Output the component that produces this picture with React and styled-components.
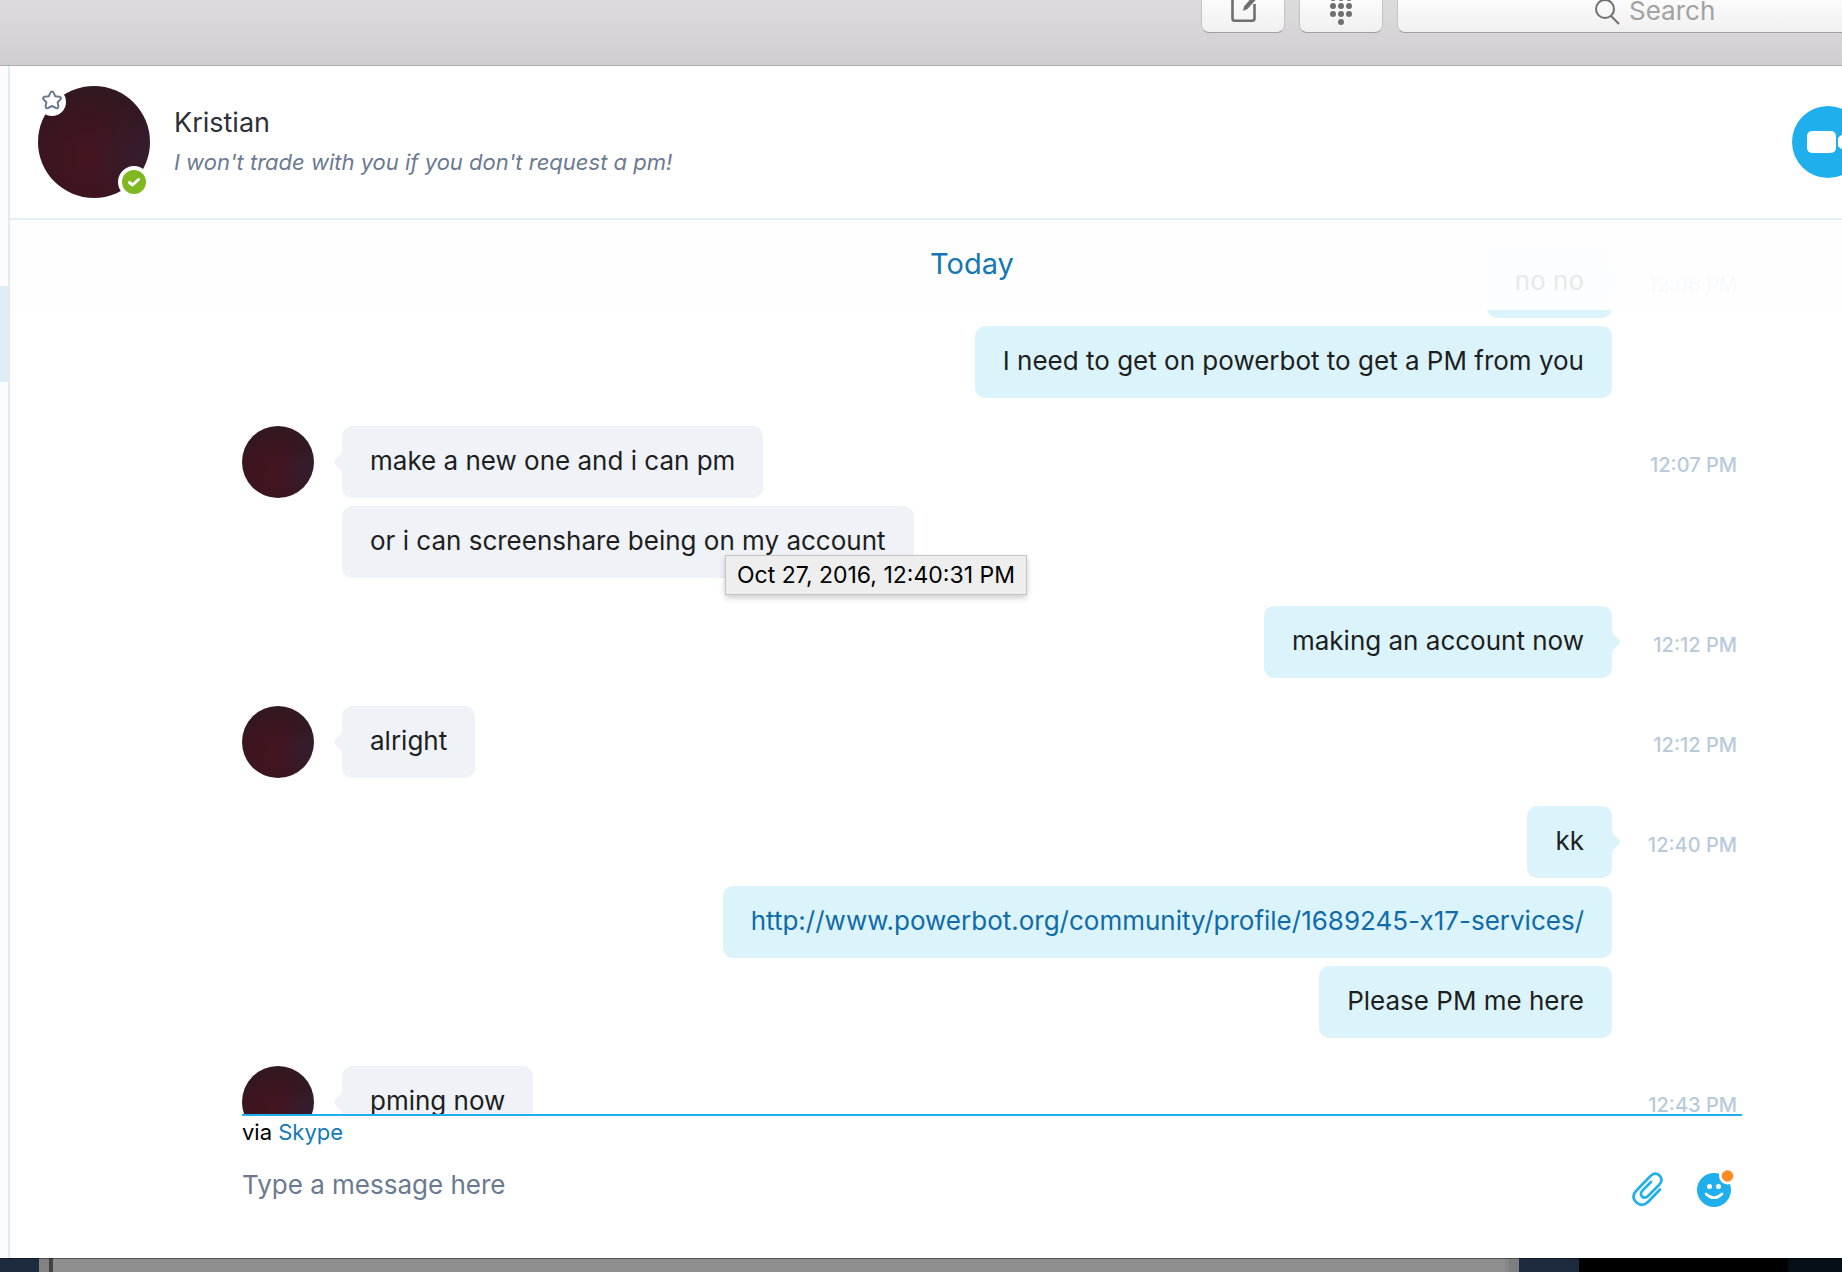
import React, { useState } from "react";
import styled, { createGlobalStyle, css } from "styled-components";

const messages = [
  { id: 1, mine: true, text: "no no", time: "12:06 PM", first: true },
  { id: 2, mine: true, text: "I need to get on powerbot to get a PM from you" },
  { id: 3, text: "make a new one and i can pm", time: "12:07 PM", first: true },
  { id: 4, text: "or i can screenshare being on my account", tip: "Oct 27, 2016, 12:40:31 PM" },
  { id: 5, mine: true, text: "making an account now", time: "12:12 PM", first: true },
  { id: 6, text: "alright", time: "12:12 PM", first: true },
  { id: 7, mine: true, text: "kk", time: "12:40 PM", first: true },
  { id: 8, mine: true, text: "http://www.powerbot.org/community/profile/1689245-x17-services/", link: true },
  { id: 9, mine: true, text: "Please PM me here" },
  { id: 10, text: "pming now", time: "12:43 PM", first: true },
];

export default function App() {
  return (
    <>
      <GlobalStyle />
      <Screen>
        <Toolbar />
        <Body>
          <Sidebar>
            <SelectedChat />
          </Sidebar>
          <Chat>
            <ChatHeader />
            <History>
              <DateBar>Today</DateBar>
              {messages.map((message) => <Message key={message.id} {...message} />)}
            </History>
            <Composer />
          </Chat>
        </Body>
        <Desktop>
          <Strip color="#1e2a3f" />
          <Strip color="#828282" />
          <Strip color="#444444" />
          <Strip color="#8f8f8f" />
          <Strip color="#868686" />
          <Strip color="#7e7e7e" />
          <Strip color="#1e2a3f" />
          <Strip color="#000000" />
          <Strip color="#050f15" />
        </Desktop>
      </Screen>
    </>
  );
}

function Toolbar() {
  return (
    <ToolbarContainer>
      <ToolbarButton aria-label="New conversation">
        <svg width="82" height="32" viewBox="0 0 82 32" fill="none">
          <path d="M42 -2H33Q30.500 -2 30.500 0.500V18.500Q30.500 20.800 33 20.800H50Q52.500 20.800 52.500 18.500V4" stroke="#6f6f6f" strokeWidth="2.600" />
          <path d="M41 11L42 6.500L51 -4L54.500 -1L45.500 9Z" fill="#6f6f6f" />
        </svg>
      </ToolbarButton>
      <ToolbarButton aria-label="Dial pad">
        <svg width="82" height="32" viewBox="0 0 82 32" fill="#6f6f6f">
          {[-2, 6, 14].map((y) => [33, 41, 49].map((x) => <circle key={x + y * 100} cx={x} cy={y} r="3" />))}
          <circle cx="41" cy="22" r="3" />
        </svg>
      </ToolbarButton>
      <SearchBox>
        <svg width="28" height="26" viewBox="0 0 28 26" fill="none" stroke="#6f6f6f" strokeWidth="2">
          <circle cx="11" cy="9" r="9" />
          <path d="M17 16L25 24" />
        </svg>
        <SearchInput type="text" placeholder="Search" aria-label="Search" />
      </SearchBox>
    </ToolbarContainer>
  );
}

function ChatHeader() {
  return (
    <HeaderContainer>
      <HeaderAvatar>
        <FavoriteButton aria-label="Add to favorites">
          <svg width="28" height="28" viewBox="0 0 28 28" fill="none" stroke="#6b7a90" strokeWidth="2" strokeLinejoin="round">
            <path d="M14 3.500Q15.200 3.500 15.700 4.800L17.300 8.300L21.300 8.800Q24 9.500 22.400 11.500L19.600 14.200L20.400 18Q20.400 20.900 18 20L14 18L10 20Q7.600 20.900 7.600 18L8.400 14.200L5.600 11.500Q4 9.500 6.700 8.800L10.700 8.300L12.300 4.800Q12.800 3.500 14 3.500Z" />
          </svg>
        </FavoriteButton>
        <OnlineBadge>
          <svg width="24" height="24" viewBox="0 0 24 24" fill="none" stroke="#ffffff" strokeWidth="3" strokeLinecap="round" strokeLinejoin="round">
            <path d="M7.500 12.500L10.500 15L16.500 9.500" />
          </svg>
        </OnlineBadge>
      </HeaderAvatar>
      <Contact>
        <ContactName>Kristian</ContactName>
        <ContactMood>I won't trade with you if you don't request a pm!</ContactMood>
      </Contact>
      <VideoButton aria-label="Video call">
        <svg width="72" height="72" viewBox="0 0 72 72" fill="#ffffff">
          <rect x="15" y="25" width="29" height="22" rx="5" />
          <path d="M46 33Q46 31 48 30L55 26Q57 25 57 28V44Q57 47 55 46L48 42Q46 41 46 39Z" />
        </svg>
      </VideoButton>
    </HeaderContainer>
  );
}

function Message({ mine, text, time, first, link, tip }) {
  return (
    <Row $first={first}>
      <AvatarSlot>{first && !mine && <SmallAvatar />}</AvatarSlot>
      <BubbleArea $mine={mine}>
        <Bubble $mine={mine}>
          {first && <Tail $mine={mine} />}
          {link ? <BubbleLink href={text}>{text}</BubbleLink> : text}
          {tip && <Tooltip role="tooltip">{tip}</Tooltip>}
        </Bubble>
      </BubbleArea>
      <Time>{time}</Time>
    </Row>
  );
}

function Tail({ $mine }) {
  return (
    <TailSvg $mine={$mine} width="8" height="28" viewBox="0 0 8 28">
      <path d="M8 0Q8 5 5 8L1.500 11.500Q-1 14 1.500 16.500L5 20Q8 23 8 28Z" />
    </TailSvg>
  );
}

function Composer() {
  const [text, setText] = useState("");

  return (
    <ComposerContainer>
      <Via>via <ViaLink href="#skype">Skype</ViaLink></Via>
      <ComposerRow>
        <ComposerInput
          type="text"
          placeholder="Type a message here"
          aria-label="Type a message here"
          value={text}
          onChange={(e) => setText(e.target.value)}
        />
        <IconButton aria-label="Attach a file">
          <svg width="40" height="40" viewBox="0 0 40 40" fill="none" stroke="#1fafec" strokeWidth="2.600" strokeLinecap="round" strokeLinejoin="round">
            <path d="M33 20.500L21.500 32.500Q15.500 38.500 9.500 33.500Q3.500 28 9 22L23 7.500Q28 2.500 32.500 6.500Q36.800 11 32 16L21 27Q17.500 30 15 27.500Q12.500 25 15.500 21.500L24 13" />
          </svg>
        </IconButton>
        <IconButton aria-label="Emoticons">
          <svg width="40" height="40" viewBox="0 0 40 40" fill="none">
            <circle cx="19" cy="21" r="17" fill="#1fafec" />
            <circle cx="14.500" cy="17.500" r="2.500" fill="#ffffff" />
            <circle cx="23.500" cy="17.500" r="2.500" fill="#ffffff" />
            <path d="M11 25Q19 32.500 27 25" stroke="#ffffff" strokeWidth="2.600" strokeLinecap="round" />
            <circle cx="32.500" cy="7" r="8.500" fill="#ffffff" />
            <circle cx="32.500" cy="7" r="5.800" fill="#ff8c22" />
          </svg>
        </IconButton>
      </ComposerRow>
    </ComposerContainer>
  );
}

const GlobalStyle = createGlobalStyle`
  * {
    box-sizing: border-box;
  }

  body {
    margin: 0;
    font-family: Inter, 'Liberation Sans', sans-serif;
    background-color: #ffffff;
    overflow: hidden;
  }

  button, input {
    font-family: inherit;
    border: none;
    padding: 0;
    background: none;
    outline: none;
  }

  button {
    cursor: pointer;
  }

  svg {
    display: block;
    flex-shrink: 0;
  }

  a {
    text-decoration: none;
  }
`;

const Screen = styled.div`
  display: flex;
  flex-direction: column;
  height: 100vh;
`;

const ToolbarContainer = styled.header`
  display: flex;
  justify-content: flex-end;
  align-items: flex-start;
  gap: 14px;
  height: 66px;
  flex-shrink: 0;
  background: linear-gradient(#dddbdd, #d0ced0);
  border-bottom: 1px solid #aeacae;
`;

const toolbarControl = css`
  height: 33px;
  background: linear-gradient(#fbfbfb, #f0f0f0);
  border: 1px solid #c4c2c4;
  border-top: none;
  border-bottom-color: #a2a0a2;
`;

const ToolbarButton = styled.button`
  ${toolbarControl}
  width: 84px;
  border-radius: 0 0 8px 8px;
  display: flex;
  justify-content: center;
  overflow: hidden;
`;

const SearchBox = styled.label`
  ${toolbarControl}
  width: 445px;
  display: flex;
  align-items: flex-start;
  gap: 7px;
  padding-left: 196px;
  border-right: none;
  border-radius: 0 0 0 8px;
`;

const SearchInput = styled.input`
  min-width: 0;
  flex: 1;
  height: 20px;
  line-height: 20px;
  font-size: 26px;
  overflow: visible;

  &::placeholder {
    color: #a2a2a2;
    opacity: 1;
    line-height: 20px;
  }
`;

const Body = styled.div`
  display: flex;
  flex: 1;
  min-height: 0;
`;

const Sidebar = styled.aside`
  width: 10px;
  flex-shrink: 0;
  padding-top: 220px;
  background-color: #fafcfd;
  border-right: 2px solid #dfecf5;
`;

const SelectedChat = styled.div`
  height: 96px;
  background-color: #e0edf5;
`;

const Chat = styled.main`
  display: flex;
  flex-direction: column;
  flex: 1;
  min-width: 0;
`;

const HeaderContainer = styled.section`
  display: flex;
  align-items: center;
  gap: 24px;
  height: 154px;
  padding-left: 28px;
  flex-shrink: 0;
  overflow: hidden;
  border-bottom: 2px solid #e5f0f6;
`;

const Avatar = styled.div`
  border-radius: 50%;
  background:
    radial-gradient(circle at 100% 65%, rgba(52, 32, 56, 0.7) 0%, rgba(52, 32, 56, 0) 45%),
    radial-gradient(circle at 45% 65%, #45151f 0%, #3b151f 45%, #2c1a22 90%);
`;

const HeaderAvatar = styled(Avatar)`
  position: relative;
  width: 112px;
  height: 112px;
  flex-shrink: 0;
`;

const FavoriteButton = styled.button`
  position: absolute;
  top: 2px;
  left: 0;
  width: 28px;
  height: 28px;
  border-radius: 50%;
  background-color: #ffffff;
`;

const OnlineBadge = styled.span`
  position: absolute;
  right: 0;
  bottom: 0;
  border: 4px solid #ffffff;
  border-radius: 50%;
  background-color: #80b822;
`;

const Contact = styled.div`
  flex: 1;
  min-width: 0;
`;

const ContactName = styled.h1`
  margin: 0;
  font-size: 27px;
  font-weight: 400;
  line-height: 40px;
  color: #2e3038;
`;

const ContactMood = styled.p`
  margin: 0;
  font-size: 22px;
  font-style: italic;
  line-height: 38px;
  color: #6b7a90;
`;

const VideoButton = styled.button`
  width: 72px;
  height: 72px;
  margin-right: -22px;
  flex-shrink: 0;
  border-radius: 50%;
  background-color: #1fafec;
`;

const History = styled.section`
  position: relative;
  flex: 1;
  min-height: 0;
  overflow: hidden;
  padding: 0 100px 0 232px;
`;

const DateBar = styled.div`
  position: absolute;
  z-index: 1;
  top: 0;
  left: 0;
  right: 0;
  height: 90px;
  padding-left: 92px;
  font-size: 29px;
  line-height: 87px;
  text-align: center;
  color: #1478b4;
  background-color: rgba(254, 254, 254, 0.9);
`;

const Row = styled.div`
  display: flex;
  height: 72px;
  margin-top: ${({ $first }) => ($first ? 28 : 8)}px;

  ${DateBar} + & {
    margin-top: 26px;
  }
`;

const AvatarSlot = styled.div`
  width: 100px;
  flex-shrink: 0;
`;

const SmallAvatar = styled(Avatar)`
  width: 72px;
  height: 72px;
`;

const BubbleArea = styled.div`
  display: flex;
  flex: 1;
  justify-content: ${({ $mine }) => ($mine ? "flex-end" : "flex-start")};
`;

const Bubble = styled.div`
  position: relative;
  height: 72px;
  padding: 0 28px;
  border-radius: 10px;
  font-size: 26px;
  line-height: 70px;
  white-space: nowrap;
  color: #1e1e1e;
  background-color: ${({ $mine }) => ($mine ? "#dbf4fc" : "#eff3f8")};
`;

const BubbleLink = styled.a`
  color: #106ba8;
`;

const TailSvg = styled.svg`
  position: absolute;
  top: 22px;
  ${({ $mine }) => ($mine
    ? css`right: -8px; fill: #dbf4fc; transform: rotate(180deg);`
    : css`left: -8px; fill: #eff3f8;`)}
`;

const Tooltip = styled.span`
  position: absolute;
  z-index: 2;
  top: 49px;
  left: 383px;
  padding: 0 11px;
  font-size: 23px;
  line-height: 38px;
  color: #000000;
  background-color: #eeeeee;
  border: 1px solid #c4c4c4;
  box-shadow: 0 3px 6px rgba(0, 0, 0, 0.2);
`;

const Time = styled.time`
  width: 130px;
  flex-shrink: 0;
  padding-right: 5px;
  font-size: 20px;
  font-weight: 500;
  line-height: 78px;
  text-align: right;
  color: #b8cadb;
`;

const ComposerContainer = styled.section`
  height: 144px;
  flex-shrink: 0;
  margin: 0 100px 0 232px;
  border-top: 2px solid #1fafec;
`;

const Via = styled.p`
  margin: 0;
  font-size: 22px;
  line-height: 32px;
  color: #000000;
`;

const ViaLink = styled.a`
  color: #147ab8;
`;

const ComposerRow = styled.div`
  display: flex;
  align-items: center;
  gap: 28px;
  height: 82px;
  padding-right: 7px;
`;

const ComposerInput = styled.input`
  flex: 1;
  min-width: 0;
  height: 50px;
  padding-bottom: 10px;
  font-size: 26px;

  &::placeholder {
    color: #6b7a90;
    opacity: 1;
  }
`;

const IconButton = styled.button`
  width: 40px;
  height: 40px;
`;

const Desktop = styled.footer`
  display: grid;
  grid-template-columns: 39px 10px 4px 1fr 4px 10px 60px 209px 54px;
  height: 14px;
  flex-shrink: 0;
`;

const Strip = styled.div`
  background-color: ${({ color }) => color};
  border-top: 1px solid rgba(0, 0, 0, 0.4);
`;
